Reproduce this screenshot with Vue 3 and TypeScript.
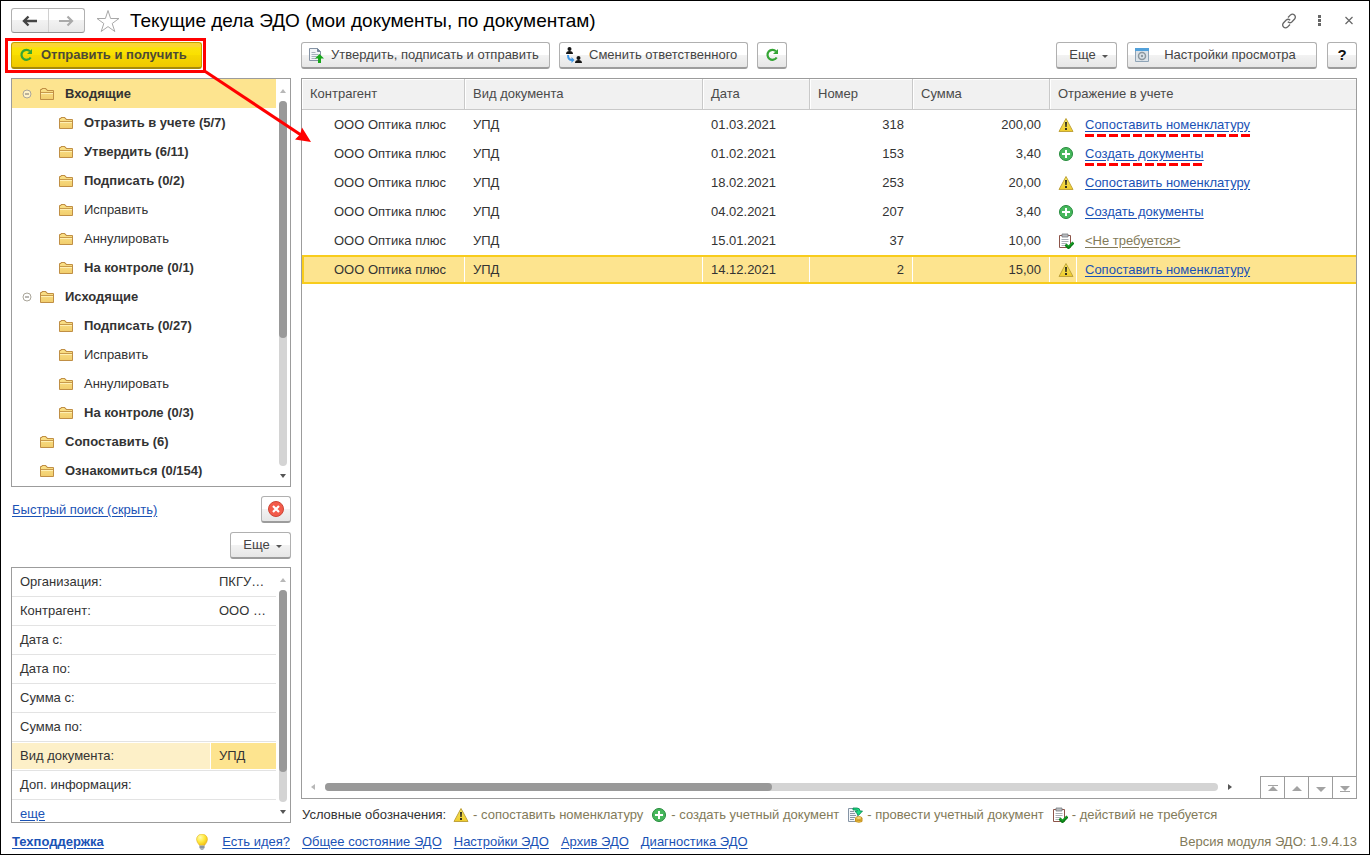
<script setup lang="ts">
type IconName = 'warn' | 'plus' | 'post' | 'done'
interface TreeItem { label: string; level: number; bold: boolean; open?: boolean; selected?: boolean }
interface Doc { date: string; num: string; sum: string; icon: IconName; action: string; muted?: boolean; mark?: boolean; selected?: boolean }

const tree: TreeItem[] = [
  { label: 'Входящие', level: 0, bold: true, open: true, selected: true },
  { label: 'Отразить в учете (5/7)', level: 1, bold: true },
  { label: 'Утвердить (6/11)', level: 1, bold: true },
  { label: 'Подписать (0/2)', level: 1, bold: true },
  { label: 'Исправить', level: 1, bold: false },
  { label: 'Аннулировать', level: 1, bold: false },
  { label: 'На контроле (0/1)', level: 1, bold: true },
  { label: 'Исходящие', level: 0, bold: true, open: true },
  { label: 'Подписать (0/27)', level: 1, bold: true },
  { label: 'Исправить', level: 1, bold: false },
  { label: 'Аннулировать', level: 1, bold: false },
  { label: 'На контроле (0/3)', level: 1, bold: true },
  { label: 'Сопоставить (6)', level: 0, bold: true },
  { label: 'Ознакомиться (0/154)', level: 0, bold: true },
]

const filters = [
  { id: 'org', label: 'Организация:', value: 'ПКГУ…' },
  { id: 'partner', label: 'Контрагент:', value: 'ООО …' },
  { id: 'date-from', label: 'Дата с:', value: '' },
  { id: 'date-to', label: 'Дата по:', value: '' },
  { id: 'sum-from', label: 'Сумма с:', value: '' },
  { id: 'sum-to', label: 'Сумма по:', value: '' },
  { id: 'kind', label: 'Вид документа:', value: 'УПД', selected: true },
  { id: 'info', label: 'Доп. информация:', value: '' },
]

const docs: Doc[] = [
  { date: '01.03.2021', num: '318', sum: '200,00', icon: 'warn', action: 'Сопоставить номенклатуру', mark: true },
  { date: '01.02.2021', num: '153', sum: '3,40', icon: 'plus', action: 'Создать документы', mark: true },
  { date: '18.02.2021', num: '253', sum: '20,00', icon: 'warn', action: 'Сопоставить номенклатуру' },
  { date: '04.02.2021', num: '207', sum: '3,40', icon: 'plus', action: 'Создать документы' },
  { date: '15.01.2021', num: '37', sum: '10,00', icon: 'done', action: '<Не требуется>', muted: true },
  { date: '14.12.2021', num: '2', sum: '15,00', icon: 'warn', action: 'Сопоставить номенклатуру', selected: true },
]

const legend: { icon: IconName; text: string }[] = [
  { icon: 'warn', text: '- сопоставить номенклатуру' },
  { icon: 'plus', text: '- создать учетный документ' },
  { icon: 'post', text: '- провести учетный документ' },
  { icon: 'done', text: '- действий не требуется' },
]

const links = ['Общее состояние ЭДО', 'Настройки ЭДО', 'Архив ЭДО', 'Диагностика ЭДО']
const jumps = [
  { label: 'В начало', d: 'M3 3h10v1H3zM8 4l5 5H3z' },
  { label: 'Вверх', d: 'M8 4l5 5H3z' },
  { label: 'Вниз', d: 'M3 5h10l-5 5z' },
  { label: 'В конец', d: 'M3 4h10l-5 5zM3 9h10v1H3z' },
]
</script>

<template>
  <div class="page">
    <svg class="sprite" width="0" height="0" aria-hidden="true">
      <defs>
        <linearGradient id="folder-fill" x1="0" y1="0" x2="0" y2="1">
          <stop offset="0" stop-color="#fbe28a" /><stop offset="1" stop-color="#f1cd6c" />
        </linearGradient>
        <linearGradient id="warn-fill" x1="0" y1="0" x2="0" y2="1">
          <stop offset="0" stop-color="#f7ea62" /><stop offset="1" stop-color="#efcb2c" />
        </linearGradient>
        <radialGradient id="bulb-fill" cx=".35" cy=".3" r=".8">
          <stop offset="0" stop-color="#fffcb0" /><stop offset=".5" stop-color="#ffe93c" /><stop offset="1" stop-color="#efb40c" />
        </radialGradient>
      </defs>
      <symbol id="i-folder" viewBox="0 0 16 16">
        <path d="M1.500 13.500V3.500h1.500V2.500h4v1H8v1h6.500v9z" fill="url(#folder-fill)" stroke="#c08f45" />
        <path d="M2 6.500h12" stroke="#c89a4a" /><path d="M2 7.500h12" stroke="#fff0b4" />
      </symbol>
      <symbol id="i-warn" viewBox="0 0 16 16">
        <path d="M8 1.500 15 14.500H1z" fill="url(#warn-fill)" stroke="#c1a43c" stroke-linejoin="round" />
        <path d="M7 5h2l-.3 5H7.300zM7 11h2v2H7z" fill="#332f1e" />
      </symbol>
      <symbol id="i-plus" viewBox="0 0 16 16">
        <circle cx="8" cy="8" r="6.500" fill="#46b85c" stroke="#268b3c" />
        <path d="M8 4v8M4 8h8" stroke="#fff" stroke-width="2" />
      </symbol>
      <symbol id="i-done" viewBox="0 0 16 16">
        <path d="M1.500 2.500h11v12h-11z" fill="#fff" stroke="#8c5449" />
        <path d="M4 1h6v3H4z" fill="#b9bcc0" stroke="#777b80" stroke-width=".8" />
        <path d="M3.500 6.500h7M3.500 8.500h7M3.500 10.500h5M3.500 12.500h3" stroke="#a9afb6" />
        <path d="M7.500 11.500l3 3 5-5" fill="none" stroke="#0a7c16" stroke-width="3" />
        <path d="M8 11.500l2.500 2.200 4.500-4.200" fill="none" stroke="#18b32a" />
      </symbol>
      <symbol id="i-post" viewBox="0 0 16 16">
        <path d="M1.500 1.500h9v13h-9z" fill="#f4f7fa" stroke="#8594a5" />
        <path d="M3 4.500h4M3 6.500h5M3 8.500h6M3 10.500h5M3 12.500h4" stroke="#8996a4" />
        <path d="M6 1h4q3 0 3 3h2.500L11.500 8.500 8 4h2.500Q10.500 3 9 3H6z" fill="#1bdc82" stroke="#078451" stroke-width=".8" />
        <path d="M8.500 11v3.500q3.500 1.500 6.500 0V11" fill="#f6cf4a" stroke="#c69222" />
        <ellipse cx="11.750" cy="11" rx="3.250" ry="1.300" fill="#ffeb92" stroke="#c69222" />
        <path d="M8.500 13q3.500 1.300 6.500 0" fill="none" stroke="#c69222" />
      </symbol>
      <symbol id="i-refresh" viewBox="0 0 16 16">
        <path d="M12 4.200A5 5 0 1 0 12.700 10.500" fill="none" stroke="#35a535" stroke-width="2.200" />
        <path d="M14 2v5H9z" fill="#35a535" />
      </symbol>
    </svg>

    <header class="title-bar">
      <div class="history">
        <button type="button" aria-label="Назад">
          <svg width="16" height="12" viewBox="0 0 16 12"><path d="M2 6h13M6.500 1.500 2 6l4.500 4.500" fill="none" stroke="#444" stroke-width="2.400" /></svg>
        </button>
        <button type="button" aria-label="Вперед">
          <svg width="16" height="12" viewBox="0 0 16 12"><path d="M1 6h13M9.500 1.500 14 6l-4.500 4.500" fill="none" stroke="#aaa" stroke-width="2.200" /></svg>
        </button>
      </div>
      <button type="button" class="bare star" aria-label="В избранное">
        <svg width="24" height="24" viewBox="0 0 24 24"><path d="M12 1.500l2.600 8H23l-6.800 5 2.600 8L12 17.600l-6.800 4.900 2.600-8L1 9.500h8.400z" fill="#fff" stroke="#a8a8a8" /></svg>
      </button>
      <h1>Текущие дела ЭДО (мои документы, по документам)</h1>
      <div class="window-tools">
        <button type="button" class="bare" aria-label="Ссылка">
          <svg width="16" height="16" viewBox="0 0 16 16" fill="none" stroke="#666" stroke-width="1.300"><path d="M7 4.500l2.500-2.600q2-1.600 3.900.1 1.800 2 .2 4L10.800 9q-2 1.600-4-.2" /><path d="M9 11.500l-2.500 2.600q-2 1.600-3.900-.1-1.800-2-.2-4L5.200 7q2-1.600 4 .2" /></svg>
        </button>
        <button type="button" class="bare" aria-label="Меню">
          <svg width="16" height="16" viewBox="0 0 16 16" fill="#666"><path d="M7 2h3v3H7zM7 6h3v3H7zM7 10h3v3H7z" /></svg>
        </button>
        <button type="button" class="bare" aria-label="Закрыть">
          <svg width="16" height="16" viewBox="0 0 16 16"><path d="M4.500 4l7 7M11.500 4l-7 7" stroke="#666" stroke-width="1.200" /></svg>
        </button>
      </div>
    </header>

    <main class="workspace">
      <aside class="side">
        <div class="toolbar">
          <div class="callout">
            <button type="button" class="btn primary"><svg class="ico"><use href="#i-refresh" /></svg>Отправить и получить</button>
            <svg class="arrow" width="110" height="74" viewBox="0 0 110 74" aria-hidden="true">
              <path d="M0 0 98 65" stroke="#f00" stroke-width="3" /><path d="M108 72 92 69.500 97 64.500 99 57.500z" fill="#f00" />
            </svg>
          </div>
        </div>

        <section class="panel tree">
          <ul>
            <li v-for="(item, i) in tree" :key="i" :class="{ child: item.level, bold: item.bold, selected: item.selected }">
              <button v-if="item.open" type="button" class="bare toggle" aria-label="Свернуть">
                <svg width="10" height="10" viewBox="0 0 10 10"><circle cx="5" cy="5" r="4" fill="#fff" fill-opacity=".5" stroke="#aaa69a" /><path d="M3 5h4" stroke="#77736a" /></svg>
              </button>
              <span v-else class="toggle"></span>
              <svg class="ico"><use href="#i-folder" /></svg>
              <span>{{ item.label }}</span>
            </li>
          </ul>
          <div class="vscroll"><i class="up"></i><div class="track"><div class="thumb tree-thumb"></div></div><i class="down"></i></div>
        </section>

        <div class="search-line">
          <a href="#">Быстрый поиск (скрыть)</a>
          <button type="button" class="btn square" aria-label="Очистить">
            <svg class="ico" viewBox="0 0 16 16"><circle cx="8" cy="8" r="7.500" fill="#f35b4a" stroke="#cb4536" /><path d="M5 5l6 6M11 5l-6 6" stroke="#fff" stroke-width="2.200" /></svg>
          </button>
        </div>
        <div class="more-line"><button type="button" class="btn more">Еще<i class="down"></i></button></div>

        <section class="panel filter">
          <div class="fields">
            <div v-for="f in filters" :key="f.id" class="field" :class="{ selected: f.selected }">
              <label :for="f.id">{{ f.label }}</label>
              <input :id="f.id" type="text" :value="f.value">
            </div>
            <div class="field last"><a href="#">еще</a></div>
          </div>
          <div class="vscroll"><i class="up"></i><div class="track"><div class="thumb filter-thumb"></div></div><i class="down"></i></div>
        </section>
      </aside>

      <section class="content">
        <div class="toolbar">
          <button type="button" class="btn approve">
            <svg class="ico" viewBox="0 0 16 16"><path d="M1.500 1.500h8l3 3v9h-11z" fill="#f1f4f7" stroke="#8593a4" /><path d="M9.500 1.500v3h3" fill="#75869b" stroke="#75869b" /><path d="M3.500 5.500h4M3.500 7.500h7M3.500 9.500h6M3.500 11.500h5" stroke="#a5b0bc" /><path d="M11.500 7 16 11.500h-3V16h-3v-4.500H7z" fill="#17a81b" /></svg>Утвердить, подписать и отправить</button>
          <button type="button" class="btn assign">
            <svg class="ico" viewBox="0 0 16 16"><circle cx="3.500" cy="2" r="2" fill="#151515" /><path d="M0 7q0-3 3.500-3T7 7zM9 16q0-3 3.500-3t3.500 3z" fill="#151515" /><circle cx="12.500" cy="11" r="2" fill="#151515" /><path d="M2 8q0 5 4 5" fill="none" stroke="#4199e8" stroke-width="2" /><path d="M5.500 10 8.500 13l-3 3z" fill="#4199e8" /></svg>Сменить ответственного</button>
          <button type="button" class="btn square" aria-label="Обновить"><svg class="ico"><use href="#i-refresh" /></svg></button>
          <div class="right-tools">
            <button type="button" class="btn more">Еще<i class="down"></i></button>
            <button type="button" class="btn view">
              <svg class="ico" viewBox="0 0 16 16"><path d="M1.500 1.500h13v13h-13z" fill="#dce3e9" stroke="#8fa4b7" /><path d="M1 1h14v3H1z" fill="#52a1db" /><circle cx="8" cy="9" r="3.500" fill="none" stroke="#8b979f" stroke-width="1.500" /><circle cx="8" cy="9" r="1.200" fill="#8b979f" /></svg><span>Настройки просмотра</span></button>
            <button type="button" class="btn square help">?</button>
          </div>
        </div>

        <div class="panel list">
          <table>
            <colgroup><col class="c-partner"><col class="c-kind"><col class="c-date"><col class="c-num"><col class="c-sum"><col class="c-icon"><col></colgroup>
            <thead>
              <tr><th>Контрагент</th><th>Вид документа</th><th>Дата</th><th>Номер</th><th>Сумма</th><th colspan="2">Отражение в учете</th></tr>
            </thead>
            <tbody>
              <tr v-for="d in docs" :key="d.date" :class="{ selected: d.selected }">
                <td class="partner">ООО Оптика плюс</td>
                <td>УПД</td>
                <td>{{ d.date }}</td>
                <td class="num">{{ d.num }}</td>
                <td class="num">{{ d.sum }}</td>
                <td class="state"><svg class="ico"><use :href="'#i-' + d.icon" /></svg></td>
                <td><a href="#" :class="{ muted: d.muted, mark: d.mark }">{{ d.action }}</a></td>
              </tr>
            </tbody>
          </table>
          <div class="list-foot">
            <div class="hscroll"><i class="left"></i><div class="track"><div class="thumb"></div></div><i class="right"></i></div>
            <div class="jumps">
              <button v-for="j in jumps" :key="j.label" type="button" class="bare" :aria-label="j.label">
                <svg width="16" height="12" viewBox="0 0 16 12"><path :d="j.d" fill="#a3a3a3" /></svg>
              </button>
            </div>
          </div>
        </div>

        <div class="legend">
          <span class="caption">Условные обозначения:</span>
          <span v-for="l in legend" :key="l.icon" class="entry"><svg class="ico"><use :href="'#i-' + l.icon" /></svg>{{ l.text }}</span>
        </div>
      </section>
    </main>

    <footer class="foot">
      <div class="support">
        <a href="#" class="strong">Техподдержка</a>
        <svg class="ico" viewBox="0 0 16 16"><path d="M8 0a5.500 5.500 0 0 1 5.500 5.500Q13.500 8 10.500 11.500h-5Q2.500 8 2.500 5.500A5.500 5.500 0 0 1 8 0z" fill="url(#bulb-fill)" stroke="#dca91c" stroke-width=".5" /><path d="M5.500 11.500h5V14L9 16H7l-1.500-2z" fill="#a9b2bb" /><path d="M5.500 13h5" stroke="#6f7982" /></svg>
        <a href="#">Есть идея?</a>
      </div>
      <nav><a v-for="l in links" :key="l" href="#">{{ l }}</a></nav>
      <span class="version">Версия модуля ЭДО: 1.9.4.13</span>
    </footer>
  </div>
</template>

<style>
body { margin: 0; background: #fff; }
</style>

<style scoped>
.page, .page * { box-sizing: border-box; }
.page { min-height: 100vh; display: flex; flex-direction: column; padding: 7px 12px 2px 10px; border: 1px solid #000; background: #fff; color: #333; font: 13px/16px "Liberation Sans", Arial, sans-serif; overflow: hidden; }
.sprite { position: absolute; }
.ico { display: block; width: 16px; height: 16px; flex: none; }
button, input { font: inherit; color: inherit; }
button { cursor: pointer; }
a { color: #1a52b5; text-decoration: underline; text-underline-offset: 2px; }
.bare { padding: 0; border: 0; background: none; display: grid; place-items: center; }

.title-bar { display: flex; align-items: center; height: 25px; }
.history { display: flex; width: 74px; height: 25px; border: 1px solid #b0b0b0; border-bottom-color: #929292; border-radius: 3px; background: linear-gradient(#fff 50%, #f2f2f2 50%, #e8e8e8); }
.history button { flex: 1; padding: 0; border: 0; background: none; display: grid; place-items: center; }
.history button + button { border-left: 1px solid #d0d0d0; }
.star { margin: 0 10px 0 11px; }
h1 { flex: 1; margin: 0; font-size: 19px; line-height: 24px; font-weight: 400; color: #000; white-space: nowrap; }
.window-tools { display: flex; gap: 14px; }

.workspace { flex: 1; display: grid; grid-template-columns: 280px minmax(0, 1fr); gap: 10px; margin-top: 9px; }
.side, .content { display: flex; flex-direction: column; min-height: 0; }
.toolbar { display: flex; gap: 9px; height: 27px; margin-bottom: 9px; flex: none; }
.right-tools { display: flex; gap: 10px; margin-left: auto; }
.btn { display: flex; align-items: center; height: 27px; padding: 0 8px; border: 1px solid #b0b0b0; border-bottom: 2px solid #9c9c9c; border-radius: 3px; background: linear-gradient(#fff 52%, #f2f2f2 52%, #e6e6e6); color: #444; white-space: nowrap; }
.approve { gap: 7px; width: 249px; padding: 0 6px; }
.assign { gap: 7px; width: 189px; padding: 0 6px; }
.square { width: 30px; padding: 0; justify-content: center; }
.help { font-weight: 700; font-size: 15px; color: #111; }
.more { width: 61px; justify-content: center; gap: 6px; padding: 0 4px 0 8px; }
.more .down { margin-top: 2px; border-width: 3px 3px 0; }
.view { width: 190px; padding: 0 6px; }
.view span { flex: 1; text-align: center; }
.primary { width: 191px; gap: 7px; padding: 0 6px; font-weight: 700; color: #4d4a35; border-color: #c4a100; border-bottom-color: #a58a0c; background: linear-gradient(#fcd535 0, #fcd535 18%, #fbe20c 19%, #fae000 50%, #f5d800 52%, #efc800); }
.callout { position: relative; }
.callout::before { content: ""; position: absolute; inset: -4px -4px -4px -6px; border: 3px solid #f00; pointer-events: none; }
.arrow { position: absolute; left: 192px; top: 28px; z-index: 2; pointer-events: none; }

.panel { border: 1px solid #9c9c9c; background: #fff; }
.tree { flex: 1 1 0; min-height: 408px; display: flex; overflow: hidden; }
.tree ul { flex: 1; list-style: none; margin: 0; padding: 0; }
.tree li { display: flex; align-items: center; height: 29px; padding-left: 10px; white-space: nowrap; }
.tree li.child { padding-left: 29px; }
.tree li.bold { font-weight: 700; }
.tree li.selected { background: #fde48f; }
.toggle { width: 10px; height: 10px; margin-right: 7px; }
.tree .ico { margin-right: 10px; }

.vscroll { width: 14px; display: flex; flex-direction: column; align-items: center; padding: 10px 0 8px; gap: 8px; }
.vscroll .track { flex: 1; width: 8px; border-radius: 4px; background: #d4d4d4; }
.thumb { border-radius: 4px; background: #999; }
.tree-thumb { height: 65%; }
.filter-thumb { height: 86%; }
i { width: 0; height: 0; flex: none; border: 0 solid transparent; }
.up { border-width: 0 3px 4px; border-bottom-color: #b8b8b8; }
.down { border-width: 4px 3px 0; border-top-color: #555; }
.left { border-width: 3px 4px 3px 0; border-right-color: #b8b8b8; }
.right { border-width: 3px 0 3px 4px; border-left-color: #555; }

.search-line { display: flex; justify-content: space-between; align-items: center; margin: 9px 0; padding-left: 1px; }
.more-line { display: flex; justify-content: flex-end; margin-bottom: 8px; }

.filter { flex: none; height: 256px; display: flex; overflow: hidden; }
.fields { flex: 1; }
.field { display: grid; grid-template-columns: 198px minmax(0, 1fr); gap: 1px; height: 29px; padding: 1px 0; border-bottom: 1px solid #e3e3e3; }
.field label { padding: 5px 8px; white-space: nowrap; }
.field input { min-width: 0; width: 100%; padding: 0 8px; border: 0; outline: 0; background: none; }
.field.selected label { background: #fdf0c8; }
.field.selected input { background: #fde48f; }
.field.last { border: 0; padding: 6px 8px; display: block; }

.list { flex: 1; display: flex; flex-direction: column; justify-content: space-between; min-height: 400px; }
table { width: 100%; table-layout: fixed; border-collapse: separate; border-spacing: 0; }
.c-partner { width: 163px; } .c-kind { width: 238px; } .c-date { width: 107px; } .c-num { width: 103px; } .c-sum { width: 137px; } .c-icon { width: 27px; }
th { height: 31px; padding: 0 8px; text-align: left; font-weight: 400; color: #4a4a4a; background: #f1f1f1; border-right: 1px solid #c9c9c9; border-bottom: 1px solid #c9c9c9; box-shadow: inset 1px 1px #fff; }
th:last-child { border-right: 0; }
td { height: 29px; padding: 0 8px; white-space: nowrap; border: 0 solid #f8cc1c; }
td.partner { padding-left: 32px; }
td.num { text-align: right; padding-right: 9px; }
td.state { padding: 0 0 0 8px; }
tr.selected td { background: #fde48f; border-top-width: 2px; border-bottom-width: 2px; box-shadow: inset -1px 0 #fff; }
tr.selected td:first-child { border-left-width: 2px; padding-left: 30px; }
tr.selected td:last-child { box-shadow: none; }
.muted { color: #827a59; }
.mark { position: relative; }
.mark::after { content: ""; position: absolute; left: 0; right: 0; bottom: -5px; height: 3px; background: repeating-linear-gradient(90deg, #f00 0 9px, transparent 9px 12px); }

.list-foot { display: flex; height: 22px; align-items: flex-end; }
.hscroll { flex: 1; display: flex; align-items: center; gap: 10px; padding: 0 28px 0 9px; height: 22px; }
.hscroll .track { flex: 1; height: 8px; border-radius: 4px; background: #d4d4d4; }
.hscroll .thumb { width: 50%; height: 8px; }
.jumps { display: flex; border-top: 1px solid #9c9c9c; }
.jumps button { width: 24px; height: 21px; border-left: 1px solid #9c9c9c; }

.legend { display: flex; align-items: center; height: 16px; margin: 8px 0 0 1px; white-space: nowrap; color: #827a59; }
.caption { color: #333; margin-right: 7px; }
.entry { display: flex; align-items: center; gap: 4px; margin-right: 8px; }

.foot { display: grid; grid-template-columns: 280px minmax(0, 1fr) auto; column-gap: 11px; align-items: center; height: 20px; margin-top: 9px; white-space: nowrap; }
.support { display: flex; align-items: center; padding: 0 1px 0 1px; }
.support .ico { margin: 0 12px 0 auto; }
.strong { font-weight: 700; }
nav { display: flex; gap: 12px; }
.version { color: #827a59; }
</style>
